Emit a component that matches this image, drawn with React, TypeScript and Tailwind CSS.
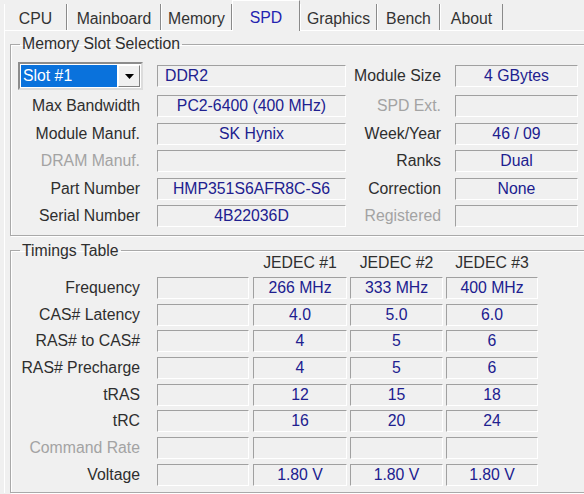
import React from 'react'

const tabs = [
  { name: 'CPU', w: 'w-[63px]' },
  { name: 'Mainboard', w: 'w-[94px]' },
  { name: 'Memory', w: 'w-[71px]' },
  { name: 'SPD', w: 'w-[68px]', active: true },
  { name: 'Graphics', w: 'w-[77px]' },
  { name: 'Bench', w: 'w-[63px]' },
  { name: 'About', w: 'w-[63px]' },
]

type SlotRow = {
  label?: string
  labelOff?: boolean
  value: string
  left?: boolean
  rLabel: string
  rOff?: boolean
  rValue: string
}

const slotRows: SlotRow[] = [
  { value: 'DDR2', left: true, rLabel: 'Module Size', rValue: '4 GBytes' },
  { label: 'Max Bandwidth', value: 'PC2-6400 (400 MHz)', rLabel: 'SPD Ext.', rOff: true, rValue: '' },
  { label: 'Module Manuf.', value: 'SK Hynix', rLabel: 'Week/Year', rValue: '46 / 09' },
  { label: 'DRAM Manuf.', labelOff: true, value: '', rLabel: 'Ranks', rValue: 'Dual' },
  { label: 'Part Number', value: 'HMP351S6AFR8C-S6', rLabel: 'Correction', rValue: 'None' },
  { label: 'Serial Number', value: '4B22036D', rLabel: 'Registered', rOff: true, rValue: '' },
]

const timings: { label: string; off?: boolean; v: string[] }[] = [
  { label: 'Frequency', v: ['266 MHz', '333 MHz', '400 MHz'] },
  { label: 'CAS# Latency', v: ['4.0', '5.0', '6.0'] },
  { label: 'RAS# to CAS#', v: ['4', '5', '6'] },
  { label: 'RAS# Precharge', v: ['4', '5', '6'] },
  { label: 'tRAS', v: ['12', '15', '18'] },
  { label: 'tRC', v: ['16', '20', '24'] },
  { label: 'Command Rate', off: true, v: ['', '', ''] },
  { label: 'Voltage', v: ['1.80 V', '1.80 V', '1.80 V'] },
]

function Field({ value, className = '', left }: { value: string; className?: string; left?: boolean }) {
  return (
    <div
      className={`h-[22px] shrink-0 flex items-center border border-t-[#a0a0a0] border-l-[#a0a0a0] border-b-white border-r-white text-[#20208f] whitespace-nowrap ${
        left ? 'justify-start pl-[7px]' : 'justify-center'
      } ${className}`}
    >
      {value}
    </div>
  )
}

function Label({ text, off, className = '' }: { text: string; off?: boolean; className?: string }) {
  return (
    <div className={`shrink-0 text-right whitespace-nowrap ${off ? 'text-[#a3a3a3]' : 'text-[#2e2e2e]'} ${className}`}>
      {text}
    </div>
  )
}

function Combo() {
  return (
    <div className="ml-[7px] w-[125px] h-[28px] flex items-center border-2 border-t-[#8c8c8c] border-l-[#8c8c8c] border-b-[#dcdcdc] border-r-[#dcdcdc] bg-white p-[1px]">
      <div className="flex-1 h-full bg-[#0a72dc] text-white flex items-center pl-[2px]">Slot #1</div>
      <div className="w-[22px] h-full ml-[1px] bg-[#f0f0f0] border border-t-white border-l-white border-b-[#808080] border-r-[#808080] flex items-center justify-center">
        <svg width="9" height="5" viewBox="0 0 9 5">
          <path d="M0 0h9L4.5 5z" fill="#000" />
        </svg>
      </div>
    </div>
  )
}

export default function App() {
  return (
    <div className="w-[584px] h-[494px] overflow-hidden bg-[#f0f0f0] font-['Liberation_Sans',Arial,sans-serif] text-[15.8px] leading-none select-none">
      {/* tab strip */}
      <div className="h-[30px] flex items-end pl-[4px] relative z-10">
        {tabs.map(t => (
          <div
            key={t.name}
            className={`${t.w} flex items-center justify-center border-l border-l-white border-r border-r-[#8a8a8a] ${
              t.active
                ? 'h-[31px] -mb-[1px] border-t border-t-white bg-[#f0f0f0] text-[#2323b0]'
                : 'h-[26px] text-[#333]'
            }`}
          >
            <span className={t.active ? 'mt-[3px]' : 'mt-[4px]'}>{t.name}</span>
          </div>
        ))}
      </div>

      {/* panel */}
      <div className="ml-[4px] border-l border-t border-white pt-[5px] pl-[5px]">
        <fieldset className="w-[578px] border border-[#a9a9a9] shadow-[inset_1px_1px_0_#fff,1px_1px_0_#fff] pb-[8px]">
          <legend className="ml-[9px] px-[2px] leading-[16px] text-[#2e2e2e]">Memory Slot Selection</legend>
          <div className="flex flex-col gap-[5.4px] mt-[10px]">
            {slotRows.map((r, i) => (
              <div key={i} className={`flex items-center ${i === 0 ? 'h-[28px]' : 'h-[22px]'}`}>
                <div className="w-[146px] shrink-0 flex justify-start">
                  {i === 0 ? <Combo /> : <Label text={r.label!} off={r.labelOff} className="w-[129px]" />}
                </div>
                <Field value={r.value} left={r.left} className="w-[189px]" />
                <Label text={r.rLabel} off={r.rOff} className="w-[95px]" />
                <Field value={r.rValue} className="ml-[14px] w-[123px]" />
              </div>
            ))}
          </div>
        </fieldset>

        <fieldset className="mt-[7px] w-[578px] border border-[#a9a9a9] shadow-[inset_1px_1px_0_#fff,1px_1px_0_#fff] pb-[6px]">
          <legend className="ml-[9px] px-[2px] leading-[16px] text-[#2e2e2e]">Timings Table</legend>
          <div className="flex h-[16px] -mt-[4px] items-center text-[#2e2e2e]">
            <div className="w-[146px] shrink-0" />
            <div className="w-[92px] shrink-0" />
            <div className="ml-[4px] w-[94px] text-center">JEDEC #1</div>
            <div className="ml-[3px] w-[93px] text-center">JEDEC #2</div>
            <div className="ml-[3px] w-[92px] text-center">JEDEC #3</div>
          </div>
          <div className="flex flex-col gap-[4.7px] mt-[6px]">
            {timings.map(r => (
              <div key={r.label} className="flex items-center h-[22px]">
                <div className="w-[146px] shrink-0">
                  <Label text={r.label} off={r.off} className="w-[129px]" />
                </div>
                <Field value="" className="w-[92px]" />
                <Field value={r.v[0]} className="ml-[4px] w-[94px]" />
                <Field value={r.v[1]} className="ml-[3px] w-[93px]" />
                <Field value={r.v[2]} className="ml-[3px] w-[92px]" />
              </div>
            ))}
          </div>
        </fieldset>
      </div>
    </div>
  )
}
